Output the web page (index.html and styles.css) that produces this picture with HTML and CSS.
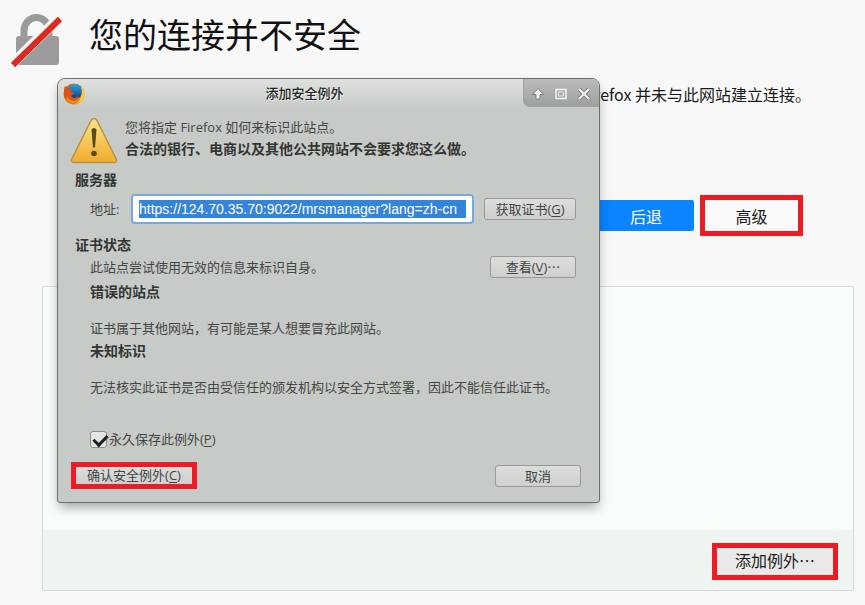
FILE: index.html
```html
<!DOCTYPE html>
<html lang="zh-CN">
<head>
    <meta charset="UTF-8" />
    <meta name="viewport" content="width=device-width, initial-scale=1.0" />
    <title>您的连接并不安全</title>
    <link rel="stylesheet" href="styles.css">
</head>
<body>
    <main class="page">
        <header class="page-header">
            <svg class="lock-icon" viewBox="0 0 52 52" aria-hidden="true">
                <path d="M13 24V16a12.500 13.500 0 0 1 25 0v8" fill="none" stroke="#9b9b9b" stroke-width="7"/>
                <rect x="5" y="21" width="43" height="29" rx="3" fill="#9b9b9b"/>
                <path d="M1 49L48 3" stroke="#f8f8f8" stroke-width="10"/>
                <path d="M2 50L49 4" stroke="#dc2a20" stroke-width="6"/>
            </svg>
            <h1>您的连接并不安全</h1>
        </header>

        <p class="page-text">Firefox 并未与此网站建立连接。</p>

        <div class="page-actions">
            <button type="button" class="back-btn">后退</button>
            <button type="button" class="advanced-btn marked">高级</button>
        </div>

        <section class="advanced-panel">
            <div class="panel-body"></div>
            <div class="panel-footer">
                <button type="button" class="exception-btn marked">添加例外⋯</button>
            </div>
        </section>
    </main>

    <div class="dialog" role="dialog" aria-labelledby="dialogTitle">
        <div class="titlebar">
            <svg class="firefox-icon" viewBox="0 0 22 22" aria-hidden="true">
                <defs>
                    <linearGradient id="fox" x1="0" y1="0" x2="1" y2="1">
                        <stop offset="0" stop-color="#d9581b"/>
                        <stop offset="0.5" stop-color="#e66a10"/>
                        <stop offset="1" stop-color="#f4a51c"/>
                    </linearGradient>
                    <linearGradient id="globe" x1="0" y1="0" x2="0" y2="1">
                        <stop offset="0" stop-color="#2da4e0"/>
                        <stop offset="1" stop-color="#123a7c"/>
                    </linearGradient>
                </defs>
                <circle cx="11" cy="11" r="10.500" fill="url(#fox)"/>
                <circle cx="12" cy="8.500" r="7.500" fill="url(#globe)"/>
                <path d="M18 3c3 3 4 7 3 11-1 3-4 6-8 7 5-4 7-10 5-18z" fill="#f9cf3c"/>
                <path d="M2 3l3 3 4 0-1 3 3 1-3 3c2 3 6 2 8 0-1 4-4 6-8 5-4-1-7-5-7-9 0-2 0-4 1-6z" fill="#d9541b"/>
                <path d="M4 13c2 5 8 7 13 2-2 5-6 6-9 5-3-1-5-4-4-7z" fill="#f08a1b"/>
            </svg>
            <h2 id="dialogTitle">添加安全例外</h2>
            <div class="window-buttons">
                <button type="button" aria-label="卷起">
                    <svg viewBox="0 0 12 12"><path d="M6 0.500L11.500 6.500H8V11H4V6.500H0.500Z" fill="#f4f5f4" stroke="#7d807d"/></svg>
                </button>
                <button type="button" aria-label="最大化">
                    <svg viewBox="0 0 12 12"><path d="M1 1.500H11V10.500H1Z" fill="none" stroke="#f4f5f4" stroke-width="1.500"/><path d="M3.500 4H8.500V8H3.500Z" fill="#a9ada9" stroke="#e4e6e4"/></svg>
                </button>
                <button type="button" aria-label="关闭">
                    <svg viewBox="0 0 12 12"><path d="M1 1L11 11M11 1L1 11" stroke="#7d807d" stroke-width="4"/><path d="M1 1L11 11M11 1L1 11" stroke="#f4f5f4" stroke-width="2"/></svg>
                </button>
            </div>
        </div>

        <form class="dialog-content">
            <div class="intro">
                <svg class="warning-icon" viewBox="0 0 48 48" aria-hidden="true">
                    <defs>
                        <linearGradient id="warn" x1="0" y1="0" x2="0" y2="1">
                            <stop offset="0" stop-color="#fbe48a"/>
                            <stop offset="1" stop-color="#f0ab2c"/>
                        </linearGradient>
                    </defs>
                    <path d="M20 4Q23 0 26 4L45 42Q47 46 43 46H3Q-1 46 1 42Z" fill="url(#warn)" stroke="#b89247" stroke-width="1.500"/>
                    <path d="M20.500 13Q23 10 25.500 13L24 31H22Z" fill="#594815"/>
                    <circle cx="23" cy="37" r="2.800" fill="#594815"/>
                </svg>
                <div>
                    <p>您将指定 Firefox 如何来标识此站点。</p>
                    <p class="strong">合法的银行、电商以及其他公共网站不会要求您这么做。</p>
                </div>
            </div>

            <h3>服务器</h3>
            <div class="address-row">
                <label for="address">地址:</label>
                <input type="text" id="address" value="https://124.70.35.70:9022/mrsmanager?lang=zh-cn" />
                <button type="button" class="btn">获取证书(<u>G</u>)</button>
            </div>

            <h3 class="status-title">证书状态</h3>
            <div class="status">
                <div class="status-row">
                    <p>此站点尝试使用无效的信息来标识自身。</p>
                    <button type="button" class="btn view-btn">查看(<u>V</u>)⋯</button>
                </div>
                <h4>错误的站点</h4>
                <p>证书属于其他网站，有可能是某人想要冒充此网站。</p>
                <h4>未知标识</h4>
                <p>无法核实此证书是否由受信任的颁发机构以安全方式签署，因此不能信任此证书。</p>
                <div class="permanent">
                    <input type="checkbox" id="permanent" checked />
                    <label for="permanent">永久保存此例外(<u>P</u>)</label>
                </div>
            </div>

            <div class="dialog-actions">
                <button type="button" class="btn confirm-btn marked">确认安全例外(<u>C</u>)</button>
                <button type="button" class="btn cancel-btn">取消</button>
            </div>
        </form>
    </div>
</body>
</html>
```

FILE: styles.css
```css
* {
    margin: 0;
    padding: 0;
    box-sizing: border-box;
}

body {
    position: relative;
    min-height: 100vh;
    font-family: "Open Sans", "Noto Sans CJK SC", sans-serif;
    font-size: 16px;
    color: #1b1b1b;
    background: #f8f8f8;
}

button,
input {
    font: inherit;
    color: inherit;
}

.page {
    display: flex;
    flex-direction: column;
    min-height: 100vh;
    padding: 14px 11px;
}

.page-header {
    display: flex;
    align-items: flex-start;
    gap: 26px;
}

.lock-icon {
    width: 52px;
    height: 54px;
}

.page-header h1 {
    font-size: 34px;
    line-height: 42px;
    font-weight: 400;
    color: #111;
}

.page-text {
    margin: 15px 43px 0 78px;
    font-family: "Noto Sans CJK SC", sans-serif;
    line-height: 22px;
    text-align: right;
}

.page-actions {
    display: flex;
    justify-content: flex-end;
    align-items: center;
    gap: 6px;
    margin: 90px 51px 0 0;
}

.back-btn {
    width: 96px;
    height: 31px;
    color: #fff;
    background: #0a84ff;
    border: none;
    border-radius: 2px;
}

.advanced-btn {
    width: 103px;
    height: 41px;
    background: #f9f9fa;
}

.marked {
    border: 5px solid #ed1c24;
}

.advanced-panel {
    flex: 1;
    display: flex;
    flex-direction: column;
    margin: 50px 0 0 31px;
    border: 1px solid #d6dad8;
}

.panel-body {
    flex: 1;
    background: #f8fdf9;
}

.panel-footer {
    display: flex;
    justify-content: flex-end;
    padding: 13px 15px 10px;
    background: #eff4f0;
}

.exception-btn {
    width: 126px;
    height: 37px;
    padding-bottom: 4px;
    background: #e9e9e9;
}

/* Dialog */
.dialog {
    position: absolute;
    top: 78px;
    left: 57px;
    width: 543px;
    font-size: 13px;
    line-height: 22px;
    color: #444644;
    background: #c7cbc7;
    border: 1px solid #6c706d;
    border-radius: 8px 8px 3px 3px;
    box-shadow: 0 6px 12px -2px rgba(0, 0, 0, 0.35);
}

.titlebar {
    display: grid;
    grid-template-columns: 76px 1fr 76px;
    height: 29px;
    border-radius: 7px 7px 0 0;
    background: linear-gradient(#dfe2df, #c7cbc7);
    overflow: hidden;
}

.firefox-icon {
    width: 22px;
    height: 22px;
    margin: 4px 5px;
}

.titlebar h2 {
    padding-right: 48px;
    font-size: 13px;
    line-height: 29px;
    font-weight: 500;
    text-align: center;
    color: #252725;
    text-shadow: 1px 1px 0 #eef0ee;
}

.window-buttons {
    display: flex;
    align-items: center;
    justify-content: center;
    gap: 11px;
    height: 28px;
    padding-top: 2px;
    padding-right: 2px;
    border: 1px solid #a0a4a0;
    border-width: 0 0 1px 1px;
    border-bottom-left-radius: 7px;
    background: linear-gradient(#b9bdb9, #9ea29e);
}

.window-buttons button {
    display: flex;
    width: 12px;
    height: 12px;
    background: none;
    border: none;
}

.window-buttons svg {
    width: 12px;
    height: 12px;
}

.dialog-content {
    padding: 8px 12px 13px 13px;
}

.intro {
    display: flex;
    gap: 6px;
}

.warning-icon {
    width: 48px;
    height: 49px;
    overflow: visible;
}

.strong,
h3,
h4 {
    font-size: 14px;
    font-weight: 700;
    color: #333533;
}

h3 {
    margin: 4px 0 3px 4px;
}

.address-row {
    display: flex;
    align-items: center;
    gap: 10px;
    margin: 0 11px 0 19px;
}

.address-row label {
    width: 31px;
}

#address {
    flex: 1;
    min-width: 0;
    height: 30px;
    padding: 4px 6px;
    font-family: "Liberation Sans", sans-serif;
    font-size: 14px;
    line-height: 18px;
    color: #fff;
    background: linear-gradient(#3584dc, #3584dc) content-box, #fff;
    border: 2px solid #79a8dc;
    border-radius: 4px;
    outline: none;
}

.btn {
    width: 92px;
    height: 22px;
    line-height: 18px;
    text-align: center;
    background: linear-gradient(#dcdedc, #cdd0cd);
    border: 1px solid #979b98;
    border-radius: 3px;
}

.btn u,
label u {
    text-underline-offset: 2px;
}

.status-title {
    margin: 10px 0 0 4px;
}

.status {
    margin-left: 19px;
}

.status-row {
    display: flex;
    align-items: center;
    justify-content: space-between;
    margin: 0 11px 3px 0;
}

.view-btn {
    width: 86px;
}

.status h4 + p {
    margin: 14px 0 1px;
}

.permanent {
    display: flex;
    align-items: center;
    gap: 2px;
    margin: 30px 0 12px;
}

.permanent input {
    appearance: none;
    width: 17px;
    height: 17px;
    border: 1px solid #8a8e8a;
    border-radius: 3px;
    background: #e4e6e4;
}

.permanent input:checked::before {
    content: "";
    display: block;
    width: 6px;
    height: 11px;
    margin: 0 0 0 5px;
    border: solid #222;
    border-width: 0 3px 3px 0;
    transform: rotate(45deg);
}

.dialog-actions {
    display: flex;
    align-items: center;
    justify-content: space-between;
    margin-right: 6px;
}

.confirm-btn {
    width: 126px;
    height: 27px;
    line-height: 17px;
    border: 5px solid #ed1c24;
    border-radius: 0;
}

.cancel-btn {
    width: 86px;
}
```
